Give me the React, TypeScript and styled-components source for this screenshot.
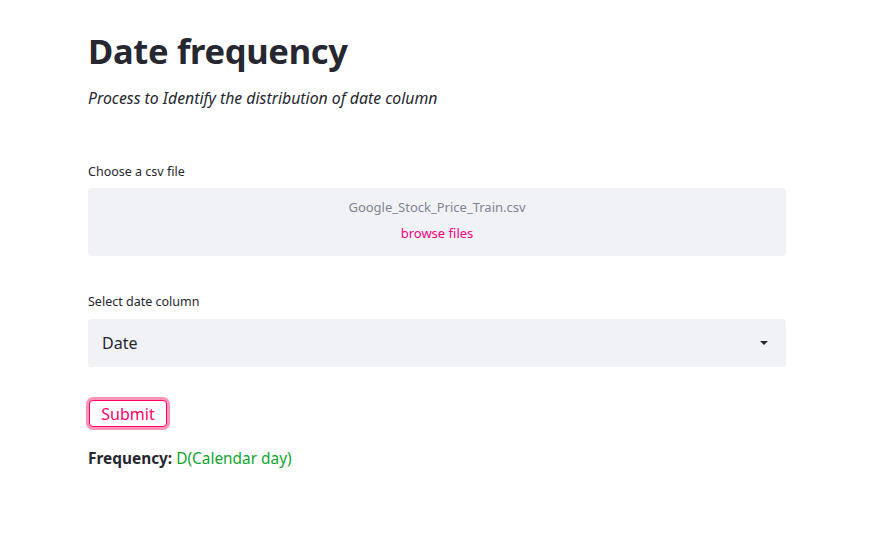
import React from "react";
import styled, { createGlobalStyle } from "styled-components";

const Global = createGlobalStyle`
  html, body { margin: 0; padding: 0; background: #fff; }
  body { font-family: "Noto Sans", "Open Sans", sans-serif; color: #262730; }
`;

const Page = styled.main`
  width: 698px;
  padding: 28px 0 0 88px;
  display: flex;
  flex-direction: column;
`;

const Title = styled.h1`
  margin: 0;
  font-size: 34.5px;
  line-height: 46px;
  font-weight: 700;
  letter-spacing: -0.3px;
  color: #262730;
`;

const Subtitle = styled.p`
  margin: 12px 0 0;
  font-style: italic;
  font-size: 15.8px;
  line-height: 24px;
  color: #262730;
`;

const Field = styled.section<{ $top: number; $gap: number }>`
  margin-top: ${(p) => p.$top}px;
  display: flex;
  flex-direction: column;
  gap: ${(p) => p.$gap}px;
`;

const Label = styled.label`
  font-size: 12.5px;
  line-height: 16px;
  color: #262730;
`;

const Dropzone = styled.div`
  height: 68px;
  box-sizing: border-box;
  padding-bottom: 4px;
  background: #f0f2f6;
  border-radius: 4px;
  display: flex;
  flex-direction: column;
  align-items: center;
  justify-content: center;
  gap: 8px;
`;

const FileName = styled.span`
  font-size: 13px;
  line-height: 18px;
  color: #808495;
`;

const Browse = styled.span`
  font-size: 13px;
  line-height: 18px;
  color: #ff0080;
`;

const Select = styled.div`
  height: 48px;
  background: #f0f2f6;
  border-radius: 4px;
  display: flex;
  align-items: center;
  justify-content: space-between;
  padding: 0 17px 0 14px;
  font-size: 16px;
  color: #262730;
`;

const SubmitButton = styled.button`
  margin: 33px 0 0 1px;
  align-self: flex-start;
  height: 27px;
  width: 78px;
  padding: 0;
  background: #fff;
  border: 1px solid #ff0068;
  border-radius: 4px;
  box-shadow: 0 0 0 3px rgba(255, 60, 130, 0.55);
  color: #ff0068;
  font-family: inherit;
  font-size: 16px;
  line-height: 24px;
`;

const Result = styled.p`
  margin: 20px 0 0;
  font-size: 15.4px;
  line-height: 24px;
`;

const Key = styled.strong`
  font-weight: 700;
  color: #262730;
`;

const Value = styled.span`
  color: #0ea52f;
`;

export default function App() {
  return (
    <>
      <Global />
      <Page>
        <Title>Date frequency</Title>
        <Subtitle>Process to Identify the distribution of date column</Subtitle>
        <Field $top={54} $gap={8}>
          <Label>Choose a csv file</Label>
          <Dropzone>
            <FileName>Google_Stock_Price_Train.csv</FileName>
            <Browse>browse files</Browse>
          </Dropzone>
        </Field>
        <Field $top={38} $gap={9}>
          <Label>Select date column</Label>
          <Select>
            <span>Date</span>
            <svg width="10" height="6" viewBox="0 0 10 6">
              <path d="M1 1h8L5 5z" fill="#262730" />
            </svg>
          </Select>
        </Field>
        <SubmitButton>Submit</SubmitButton>
        <Result>
          <Key>Frequency:</Key> <Value>D(Calendar day)</Value>
        </Result>
      </Page>
    </>
  );
}
